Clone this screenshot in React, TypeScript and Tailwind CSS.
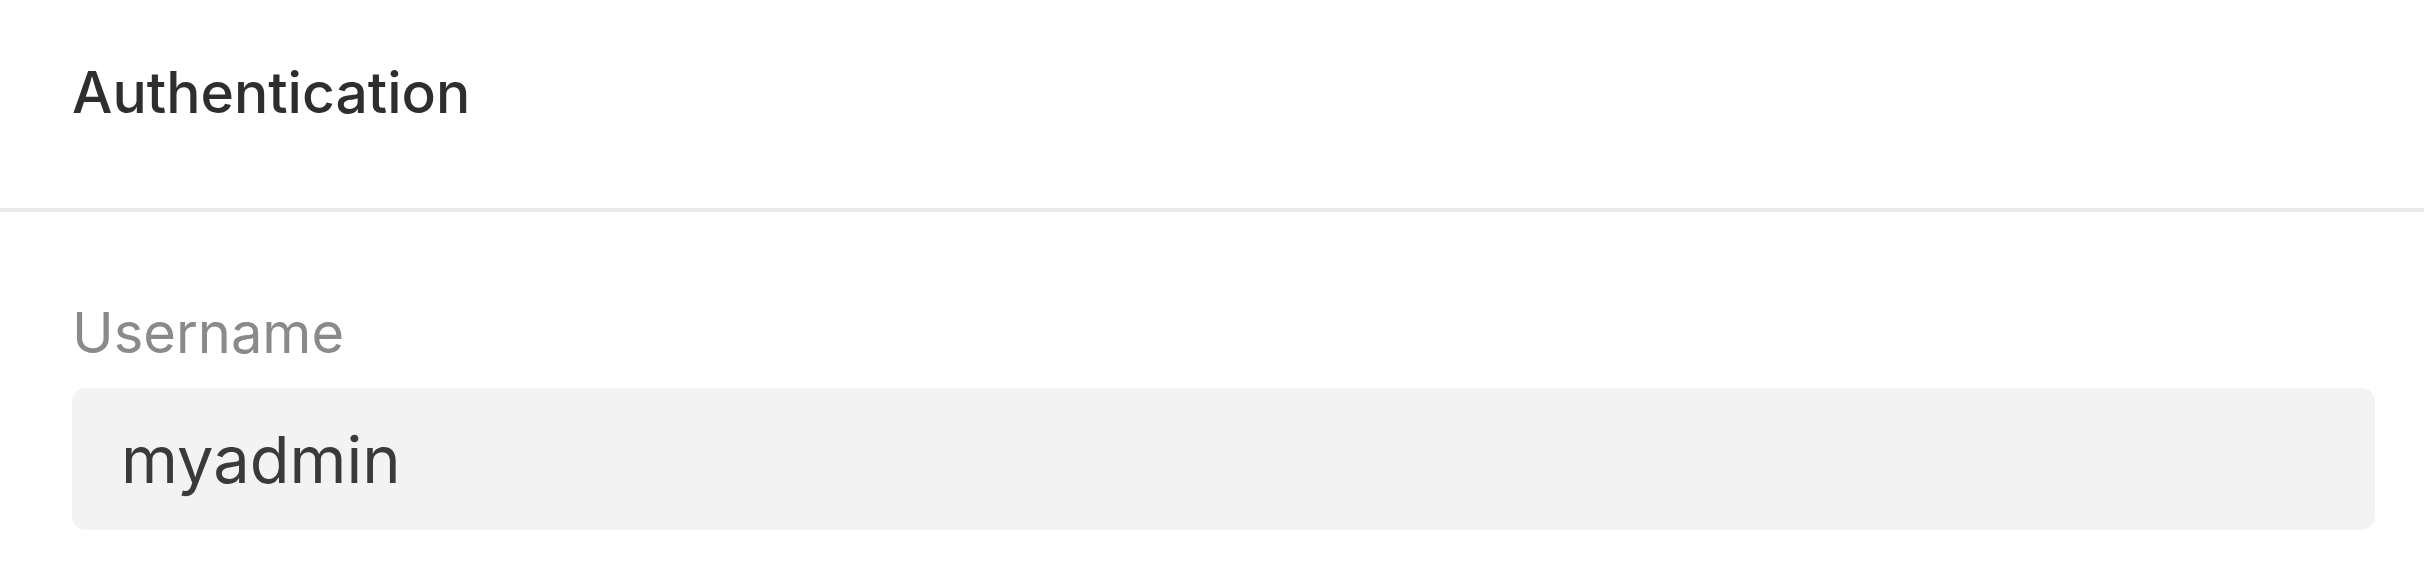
export default function App() {
  return (
    <div
      className="w-[2424px] h-[580px] bg-white overflow-hidden flex flex-col"
      style={{ fontFamily: 'Inter, "Noto Sans", sans-serif' }}
    >
      <div className="h-[208px] flex items-center pl-[72px] pb-[23px]">
        <span className="text-[57px] font-medium text-[#2e2e2e] leading-none">
          Authentication
        </span>
      </div>
      <div className="h-[4px] bg-[#e9e9e9]" />
      <div className="flex flex-col pl-[72px] pr-[49px] pt-[93px]">
        <span className="text-[56px] text-[#8a8a8a] leading-none">Username</span>
        <div className="mt-[27px] h-[142px] rounded-[14px] bg-[#f4f3f4] flex items-center pl-[49px]">
          <span className="text-[65px] text-[#3a3a3a] leading-none">myadmin</span>
        </div>
      </div>
    </div>
  );
}
